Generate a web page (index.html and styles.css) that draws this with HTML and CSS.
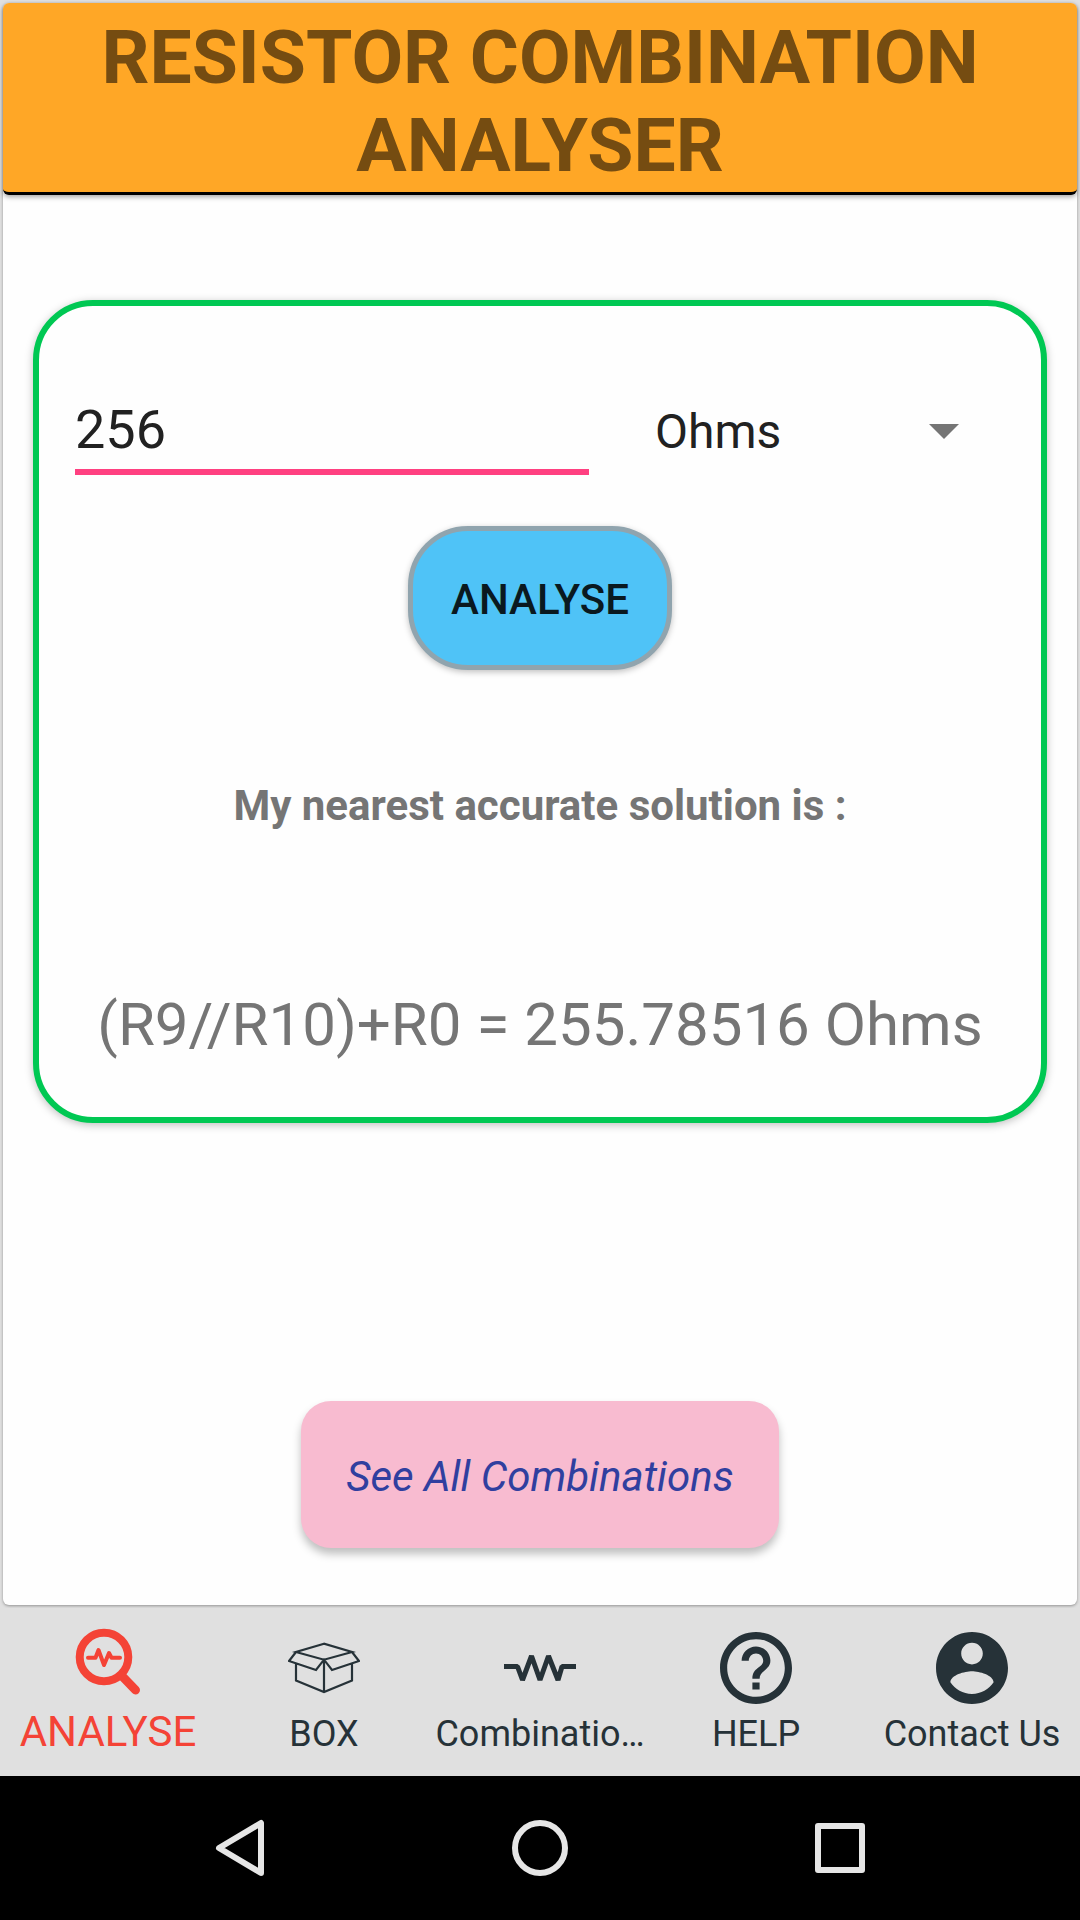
FILE: index.html
```html
<!DOCTYPE html>
<html lang="en">
<head>
<meta charset="utf-8">
<meta name="viewport" content="width=device-width, initial-scale=1">
<title>Resistor Combination Analyser</title>
<link rel="stylesheet" href="styles.css">
</head>
<body>
<main class="page">
  <header class="title-bar"><h1 class="title">RESISTOR COMBINATION ANALYSER</h1></header>
  <form class="card">
    <div class="fields">
      <input class="value" type="text" value="256" aria-label="Resistance value">
      <div class="unit">
        <select class="unit-select" aria-label="Unit"><option>Ohms</option></select>
        <svg class="caret" viewBox="0 0 30 15" aria-hidden="true"><path d="M0 0h30L15 15z"/></svg>
      </div>
    </div>
    <button class="analyse" type="button">ANALYSE</button>
    <p class="caption">My nearest accurate solution is :</p>
    <p class="result">(R9//R10)+R0 = 255.78516 Ohms</p>
  </form>
  <button class="see-all" type="button">See All Combinations</button>
</main>
<nav class="tabs">
  <a class="tab tab-active" href="#analyse">
    <svg class="tab-icon" viewBox="0 0 72 72" aria-hidden="true"><g fill="none" stroke="currentColor" stroke-linecap="round" stroke-linejoin="round"><circle cx="32" cy="31" r="24.3" stroke-width="8"/><path d="M50 50l13.500 14" stroke-width="9"/><path d="M16 31.700h7.500L26.500 24 32 39l5-12 2.500 4.700H48" stroke-width="4"/></g></svg>
    <span class="tab-label">ANALYSE</span>
  </a>
  <a class="tab" href="#box">
    <svg class="tab-icon" viewBox="0 0 72 72" aria-hidden="true"><path d="M36 11.700L8 20l28 7.700L64 20zM8 20L1 29l27 9 8-10.300L44 38l27-9-7-9M8 31.500v17L36 60l28-11.500v-17M36 27.700V60" fill="none" stroke="currentColor" stroke-width="2.200"/></svg>
    <span class="tab-label">BOX</span>
  </a>
  <a class="tab" href="#combinations">
    <svg class="tab-icon" viewBox="0 0 72 72" aria-hidden="true"><path d="M0 34.500h13.500L18.500 48 27.500 24 36 48 44.500 24 54 48l4-13.500h14" fill="none" stroke="currentColor" stroke-width="5" stroke-linejoin="bevel"/></svg>
    <span class="tab-label">Combinatio…</span>
  </a>
  <a class="tab" href="#help">
    <svg class="tab-icon" viewBox="2 2 20 20" aria-hidden="true"><path fill="currentColor" d="M11 18h2v-2h-2v2zm1-16C6.480 2 2 6.480 2 12s4.480 10 10 10 10-4.480 10-10S17.520 2 12 2zm0 18c-4.410 0-8-3.590-8-8s3.590-8 8-8 8 3.590 8 8-3.590 8-8 8zm0-14c-2.210 0-4 1.790-4 4h2c0-1.100.9-2 2-2s2 .9 2 2c0 2-3 1.750-3 5h2c0-2.250 3-2.500 3-5 0-2.210-1.790-4-4-4z"/></svg>
    <span class="tab-label">HELP</span>
  </a>
  <a class="tab" href="#contact">
    <svg class="tab-icon" viewBox="2 2 20 20" aria-hidden="true"><path fill="currentColor" d="M12 2C6.480 2 2 6.480 2 12s4.480 10 10 10 10-4.480 10-10S17.520 2 12 2zm0 3c1.660 0 3 1.340 3 3s-1.340 3-3 3-3-1.340-3-3 1.340-3 3-3zm0 14.200c-2.500 0-4.710-1.280-6-3.220.03-1.990 4-3.080 6-3.080 1.990 0 5.970 1.090 6 3.080-1.290 1.940-3.500 3.220-6 3.220z"/></svg>
    <span class="tab-label">Contact Us</span>
  </a>
</nav>
<footer class="system">
  <button class="key" type="button" aria-label="Back"><svg class="key-icon" viewBox="0 0 60 60" aria-hidden="true"><path d="M9 30L51 5v50z"/></svg></button>
  <button class="key" type="button" aria-label="Home"><svg class="key-icon" viewBox="0 0 60 60" aria-hidden="true"><circle cx="30" cy="30" r="25"/></svg></button>
  <button class="key" type="button" aria-label="Recent apps"><svg class="key-icon" viewBox="0 0 60 60" aria-hidden="true"><rect x="8" y="8" width="44" height="44"/></svg></button>
</footer>
</body>
</html>
```
FILE: styles.css
```css
* { box-sizing: border-box; }

body {
  margin: 0;
  min-height: 100vh;
  display: flex;
  flex-direction: column;
  background: #e0e0e0;
  font-family: Roboto, "Liberation Sans", sans-serif;
  color: #757575;
}

h1, p { margin: 0; }

button, input, select { font: inherit; color: inherit; }

.page {
  flex: 1;
  display: flex;
  flex-direction: column;
  margin: 3px;
  border-radius: 6px;
  background: #fefefe;
  box-shadow: 0 1px 3px rgba(0, 0, 0, 0.35);
}

.title-bar {
  padding: 10px 0 3px;
  border-bottom: 3px solid #000;
  border-radius: 6px;
  background: #ffa726;
  box-shadow: 0 2px 5px rgba(0, 0, 0, 0.35);
}

.title {
  font-size: 75px;
  line-height: 88px;
  font-weight: 700;
  text-align: center;
  color: #754c11;
}

.card {
  display: flex;
  flex-direction: column;
  align-items: center;
  margin: 105px 30px 0;
  padding: 84px 36px 57px;
  border: 6px solid #00c853;
  border-radius: 60px;
  background: #fefefe;
  box-shadow: 0 2px 8px rgba(0, 0, 0, 0.25);
}

.fields {
  align-self: stretch;
  display: grid;
  grid-template-columns: 514fr 350fr;
  gap: 66px;
  color: #212121;
}

.value {
  width: 100%;
  min-width: 0;
  height: 85px;
  padding: 0;
  border: 0;
  border-bottom: 6px solid #ff4081;
  background: none;
  font-size: 54px;
  outline: 0;
}

.unit {
  display: flex;
  align-items: center;
  height: 83px;
  padding-right: 46px;
}

.unit-select {
  flex: 1;
  min-width: 0;
  height: 83px;
  padding: 0;
  border: 0;
  appearance: none;
  background: none;
  font-size: 48px;
}

.caret { width: 30px; fill: #757575; }

.analyse {
  margin-top: 51px;
  width: 264px;
  height: 144px;
  padding: 2px 0 0;
  border: 5px solid #90a4ae;
  border-radius: 60px;
  background: #4fc3f7;
  box-shadow: 0 2px 6px rgba(0, 0, 0, 0.25);
  font-size: 42px;
  font-weight: 500;
  color: #0a1920;
}

.caption {
  margin-top: 112px;
  font-size: 42px;
  line-height: 48px;
  font-weight: 700;
}

.result {
  margin-top: 160px;
  font-size: 60px;
  line-height: 70px;
  text-align: center;
}

.see-all {
  align-self: center;
  margin: auto 0 57px;
  width: 478px;
  height: 147px;
  padding: 4px 0 0;
  border: 0;
  border-radius: 30px;
  background: #f8bbd0;
  box-shadow: 0 6px 8px rgba(0, 0, 0, 0.25);
  font-size: 42px;
  font-style: italic;
  color: #303f9f;
}

.tabs {
  display: grid;
  grid-template-columns: repeat(5, 1fr);
  height: 168px;
  background: #e0e0e0;
}

.tab {
  display: flex;
  flex-direction: column;
  align-items: center;
  min-width: 0;
  padding: 24px 0 0;
  text-decoration: none;
  font-size: 36px;
  line-height: 42px;
  color: #263238;
}

.tab-icon { width: 72px; height: 72px; }

.tab-label {
  margin-top: 9px;
  white-space: nowrap;
}

.tab-active {
  padding-top: 18px;
  font-size: 42px;
  line-height: 50px;
  color: #f44336;
}

.system {
  display: flex;
  justify-content: center;
  gap: 180px;
  height: 144px;
  background: #000;
}

.key {
  width: 120px;
  padding: 0;
  border: 0;
  background: none;
}

.key-icon {
  display: block;
  width: 60px;
  margin: 0 auto;
  fill: none;
  stroke: #e6e6e6;
  stroke-width: 6;
  stroke-linejoin: round;
}
```
